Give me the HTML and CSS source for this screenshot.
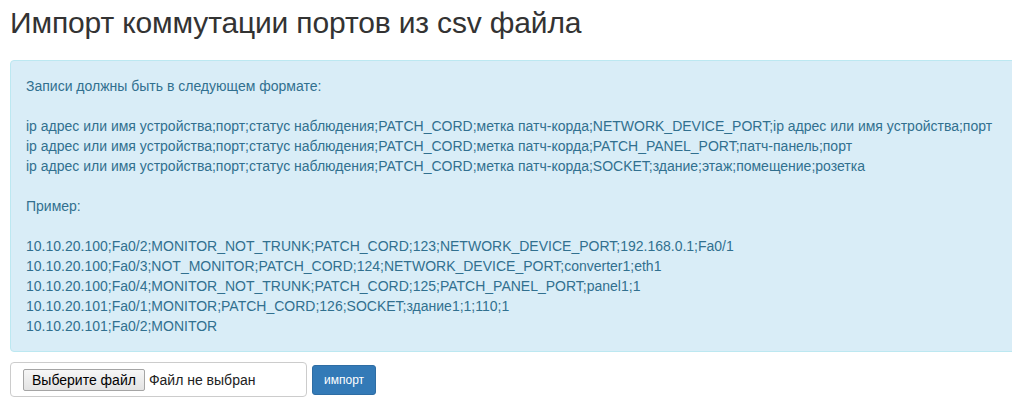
FILE: index.html
```html
<!DOCTYPE html>
<html lang="ru">
<head>
<meta charset="utf-8">
<title>Импорт коммутации портов из csv файла</title>
<link rel="stylesheet" href="styles.css">
</head>
<body>
<div class="page">
  <h2 class="title">Импорт коммутации портов из csv файла</h2>
  <div class="alert">
    <div class="line">Записи должны быть в следующем формате:</div>
    <div class="line blank">&nbsp;</div>
    <div class="line">ip адрес или имя устройства;порт;статус наблюдения;PATCH_CORD;метка патч-корда;NETWORK_DEVICE_PORT;ip адрес или имя устройства;порт</div>
    <div class="line">ip адрес или имя устройства;порт;статус наблюдения;PATCH_CORD;метка патч-корда;PATCH_PANEL_PORT;патч-панель;порт</div>
    <div class="line">ip адрес или имя устройства;порт;статус наблюдения;PATCH_CORD;метка патч-корда;SOCKET;здание;этаж;помещение;розетка</div>
    <div class="line blank">&nbsp;</div>
    <div class="line">Пример:</div>
    <div class="line blank">&nbsp;</div>
    <div class="line">10.10.20.100;Fa0/2;MONITOR_NOT_TRUNK;PATCH_CORD;123;NETWORK_DEVICE_PORT;192.168.0.1;Fa0/1</div>
    <div class="line">10.10.20.100;Fa0/3;NOT_MONITOR;PATCH_CORD;124;NETWORK_DEVICE_PORT;converter1;eth1</div>
    <div class="line">10.10.20.100;Fa0/4;MONITOR_NOT_TRUNK;PATCH_CORD;125;PATCH_PANEL_PORT;panel1;1</div>
    <div class="line">10.10.20.101;Fa0/1;MONITOR;PATCH_CORD;126;SOCKET;здание1;1;110;1</div>
    <div class="line">10.10.20.101;Fa0/2;MONITOR</div>
  </div>
  <form class="upload">
    <label class="file-box">
      <span class="file-btn">Выберите файл</span>
      <span class="file-name">Файл не выбран</span>
    </label>
    <button type="button" class="btn-import">импорт</button>
  </form>
</div>
</body>
</html>
```

FILE: styles.css
```css
html, body {
  margin: 0;
  padding: 0;
  overflow: hidden;
  background: #fff;
}

body {
  font-family: "Liberation Sans", Arial, Helvetica, sans-serif;
  font-size: 14px;
  line-height: 20px;
  color: #333;
}

.page {
  padding: 0 10px;
  width: 1100px;
}

.title {
  margin: 6px 0 21px;
  font-size: 30px;
  font-weight: 500;
  line-height: 33px;
  letter-spacing: -0.15px;
  color: #333;
}

.alert {
  background: #d9edf7;
  border: 1px solid #bce8f1;
  border-radius: 4px;
  color: #31708f;
  padding: 15px;
  margin-bottom: 10px;
}

.line {
  white-space: nowrap;
}

.upload {
  display: flex;
  align-items: center;
  gap: 5px;
}

.file-box {
  display: flex;
  align-items: center;
  box-sizing: border-box;
  width: 297px;
  height: 35px;
  padding: 0 12px;
  border: 1px solid #ccc;
  border-radius: 4px;
  font-size: 14px;
  color: #000;
}

.file-btn {
  box-sizing: border-box;
  height: 22px;
  line-height: 20px;
  padding: 0 8px;
  border: 1px solid #a5a5a5;
  border-radius: 2px;
  background: linear-gradient(#f6f6f6, #e3e3e3);
  color: #000;
  margin-right: 4px;
}

.file-name {
  color: #222;
}

.btn-import {
  box-sizing: border-box;
  height: 30px;
  padding: 5px 11px;
  font-family: "Liberation Sans", Arial, sans-serif;
  font-size: 12px;
  line-height: 18px;
  color: #fff;
  background: #337ab7;
  border: 1px solid #2e6da4;
  border-radius: 3px;
}
```
